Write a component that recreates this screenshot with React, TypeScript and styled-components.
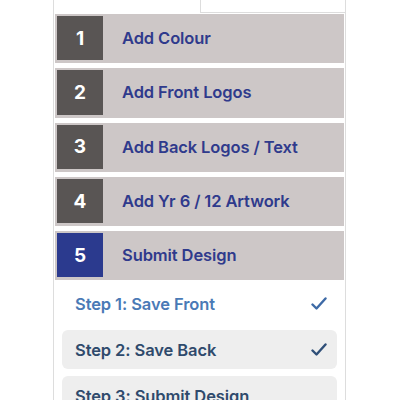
import React from "react";
import styled, { createGlobalStyle } from "styled-components";

const GlobalStyle = createGlobalStyle`
    html, body {
        margin: 0;
        padding: 0;
        background: #ffffff;
        font-family: Inter, "Noto Sans", sans-serif;
    }
`;

const Wrapper = styled.div`
    width: 293px;
    margin-left: 53px;
    height: 400px;
    overflow: hidden;
`;

const TabRow = styled.div`
    display: flex;
    height: 13px;
`;

const Tab = styled.div`
    width: 146px;
    border-left: 1px solid #dddddd;
    border-right: 1px solid #dddddd;
    background: #ffffff;
`;

const TabFiller = styled.div`
    flex: 1;
    border-bottom: 1px solid #dddddd;
    border-right: 1px solid #dddddd;
`;

const Panel = styled.div`
    border-left: 1px solid #dddddd;
    border-right: 1px solid #dddddd;
    padding: 1px 1px 0 1px;
    display: flex;
    flex-direction: column;
`;

const StageList = styled.div`
    display: flex;
    flex-direction: column;
    gap: 5px;
`;

const StageRow = styled.div`
    display: flex;
    align-items: center;
    height: 49.3px;
    box-sizing: border-box;
    padding: 2px 0 3px 2px;
    background: #cdc7c7;
`;

const StageNumber = styled.div<{ $active?: boolean }>`
    width: 46px;
    height: 100%;
    display: flex;
    align-items: center;
    justify-content: center;
    background: ${(p) => (p.$active ? "#2b3a8e" : "#595554")};
    color: #ffffff;
    font-size: 19px;
    font-weight: 700;
`;

const StageLabel = styled.span`
    margin-left: 19px;
    color: #2f3a8c;
    font-size: 16.5px;
    font-weight: 600;
    letter-spacing: -0.1px;
`;

const StepList = styled.div`
    display: flex;
    flex-direction: column;
    gap: 7px;
    padding: 4px 7px 0 7px;
`;

const StepItem = styled.div<{ $filled?: boolean }>`
    display: flex;
    align-items: center;
    justify-content: space-between;
    height: 39px;
    padding: 0 10px 0 13px;
    border-radius: 6px;
    background: ${(p) => (p.$filled ? "#eeeeee" : "#ffffff")};
`;

const StepText = styled.span<{ $light?: boolean }>`
    color: ${(p) => (p.$light ? "#4a7ab6" : "#2f4a6c")};
    font-size: 16.5px;
    font-weight: 600;
    letter-spacing: -0.1px;
`;

const Check = ({ color }: { color: string }) => (
    <svg width="16" height="14" viewBox="0 0 16 14">
        <polyline
            points="1.5,7.5 5.5,11.5 14.5,1.5"
            fill="none"
            stroke={color}
            strokeWidth="2.4"
            strokeLinecap="round"
            strokeLinejoin="round"
        />
    </svg>
);

const stages = [
    "Add Colour",
    "Add Front Logos",
    "Add Back Logos / Text",
    "Add Yr 6 / 12 Artwork",
    "Submit Design",
];

const steps = [
    { label: "Step 1: Save Front", done: true, filled: false, light: true },
    { label: "Step 2: Save Back", done: true, filled: true, light: false },
    { label: "Step 3: Submit Design", done: false, filled: true, light: false },
];

const App: React.FC = () => {
    return (
        <>
            <GlobalStyle />
            <Wrapper>
                <TabRow>
                    <Tab />
                    <TabFiller />
                </TabRow>
                <Panel>
                    <StageList>
                        {stages.map((name, i) => (
                            <StageRow key={name}>
                                <StageNumber $active={i === 4}>{i + 1}</StageNumber>
                                <StageLabel>{name}</StageLabel>
                            </StageRow>
                        ))}
                    </StageList>
                    <StepList>
                        {steps.map((s) => (
                            <StepItem key={s.label} $filled={s.filled}>
                                <StepText $light={s.light}>{s.label}</StepText>
                                {s.done && <Check color={s.light ? "#3d6aa6" : "#2f4f78"} />}
                            </StepItem>
                        ))}
                    </StepList>
                </Panel>
            </Wrapper>
        </>
    );
};

export default App;
